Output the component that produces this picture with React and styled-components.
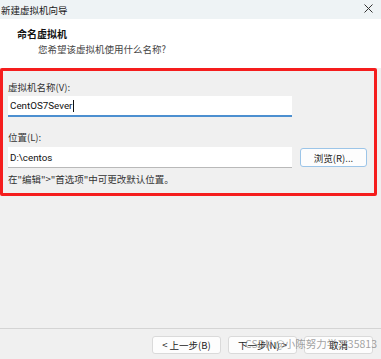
import React from 'react';
import styled, { createGlobalStyle } from 'styled-components';

const Global = createGlobalStyle`
  html, body {
    margin: 0;
    padding: 0;
    background: #f0f0f0;
  }
  body {
    font-family: "Noto Sans CJK SC", sans-serif;
    font-size: 9.5px;
    color: #222;
  }
`;

const Window = styled.div`
  position: relative;
  width: 381px;
  height: 359px;
  display: flex;
  flex-direction: column;
  background: #f0f0f0;
  overflow: hidden;
`;

const TitleBar = styled.div`
  height: 19px;
  flex: none;
  display: flex;
  align-items: center;
  justify-content: space-between;
  padding: 0 8px 0 1px;
  background: #eef3f5;
  font-size: 9.5px;
  color: #1a1a1a;
`;

const Close = styled.svg`
  width: 9px;
  height: 9px;
  margin-top: -2px;
`;

const Header = styled.div`
  height: 49px;
  flex: none;
  background: #fff;
  padding: 8px 0 0 17px;
  box-sizing: border-box;
`;

const HeadTitle = styled.div`
  font-size: 10px;
  font-weight: 700;
  line-height: 14px;
  color: #111;
`;

const HeadSub = styled.div`
  font-size: 9.5px;
  line-height: 14px;
  margin: 1px 0 0 21px;
  color: #444;
`;

const Panel = styled.div`
  flex: none;
  height: 128px;
  width: 377px;
  box-sizing: border-box;
  border: 3px solid #f51d1d;
  border-radius: 2px;
  padding: 9px 0 0 5px;
  display: flex;
  flex-direction: column;
`;

const Label = styled.div`
  font-size: 9.5px;
  line-height: 14px;
  color: #333;
  margin-top: ${p => p.$top || 0}px;
`;

const Field = styled.div`
  width: 284px;
  height: 21px;
  box-sizing: border-box;
  background: #fff;
  border-bottom: ${p => (p.$focus ? '2px solid #4c8fd0' : '1px solid #b9b9b9')};
  display: flex;
  align-items: center;
  padding-left: 2px;
  font-family: Roboto, "Noto Sans", sans-serif;
  font-size: 9.8px;
  color: #111;
  margin-top: ${p => p.$top || 0}px;
`;

const Caret = styled.span`
  display: inline-block;
  width: 1px;
  height: 12px;
  background: #111;
  margin-left: 1px;
`;

const Row = styled.div`
  display: flex;
  align-items: center;
  gap: 8px;
  margin-top: 3px;
`;

const Button = styled.div`
  width: ${p => p.$w || 69}px;
  height: ${p => p.$h || 18}px;
  box-sizing: border-box;
  border: 1px solid ${p => (p.$primary ? '#9cc5e8' : '#dadada')};
  border-radius: 3px;
  background: #fdfdfd;
  display: flex;
  align-items: center;
  justify-content: center;
  font-size: 9.5px;
  color: #222;
`;

const Hint = styled.div`
  font-size: 9.5px;
  line-height: 14px;
  color: #333;
  margin-top: 4px;
`;

const Spacer = styled.div`
  flex: 1;
`;

const Footer = styled.div`
  height: 31px;
  flex: none;
  border-top: 1px solid #d4d4d4;
  box-sizing: border-box;
  display: flex;
  justify-content: flex-end;
  gap: 7px;
  padding: 7px 8px 0 0;
`;

const Watermark = styled.div`
  position: absolute;
  right: 4px;
  bottom: 8px;
  font-size: 10.5px;
  color: rgba(120, 120, 120, 0.7);
  pointer-events: none;
`;

export default function App() {
  return (
    <Window>
      <Global />
      <TitleBar>
        <span>新建虚拟机向导</span>
        <Close viewBox="0 0 9 9">
          <path d="M0.5 0.5 L8.5 8.5 M8.5 0.5 L0.5 8.5" stroke="#333" strokeWidth="1" fill="none" />
        </Close>
      </TitleBar>
      <Header>
        <HeadTitle>命名虚拟机</HeadTitle>
        <HeadSub>您希望该虚拟机使用什么名称?</HeadSub>
      </Header>
      <Panel>
        <Label>虚拟机名称(V):</Label>
        <Field $focus $top={2}>
          CentOS7Sever<Caret />
        </Field>
        <Label $top={13}>位置(L):</Label>
        <Row>
          <Field>D:\centos</Field>
          <Button $primary $w={67} $h={19}>浏览(R)...</Button>
        </Row>
        <Hint>在"编辑"&gt;"首选项"中可更改默认位置。</Hint>
      </Panel>
      <Spacer />
      <Footer>
        <Button>&lt; 上一步(B)</Button>
        <Button>下一步(N) &gt;</Button>
        <Button>取消</Button>
      </Footer>
      <Watermark>CSDN @小陈努力学习35813</Watermark>
    </Window>
  );
}
